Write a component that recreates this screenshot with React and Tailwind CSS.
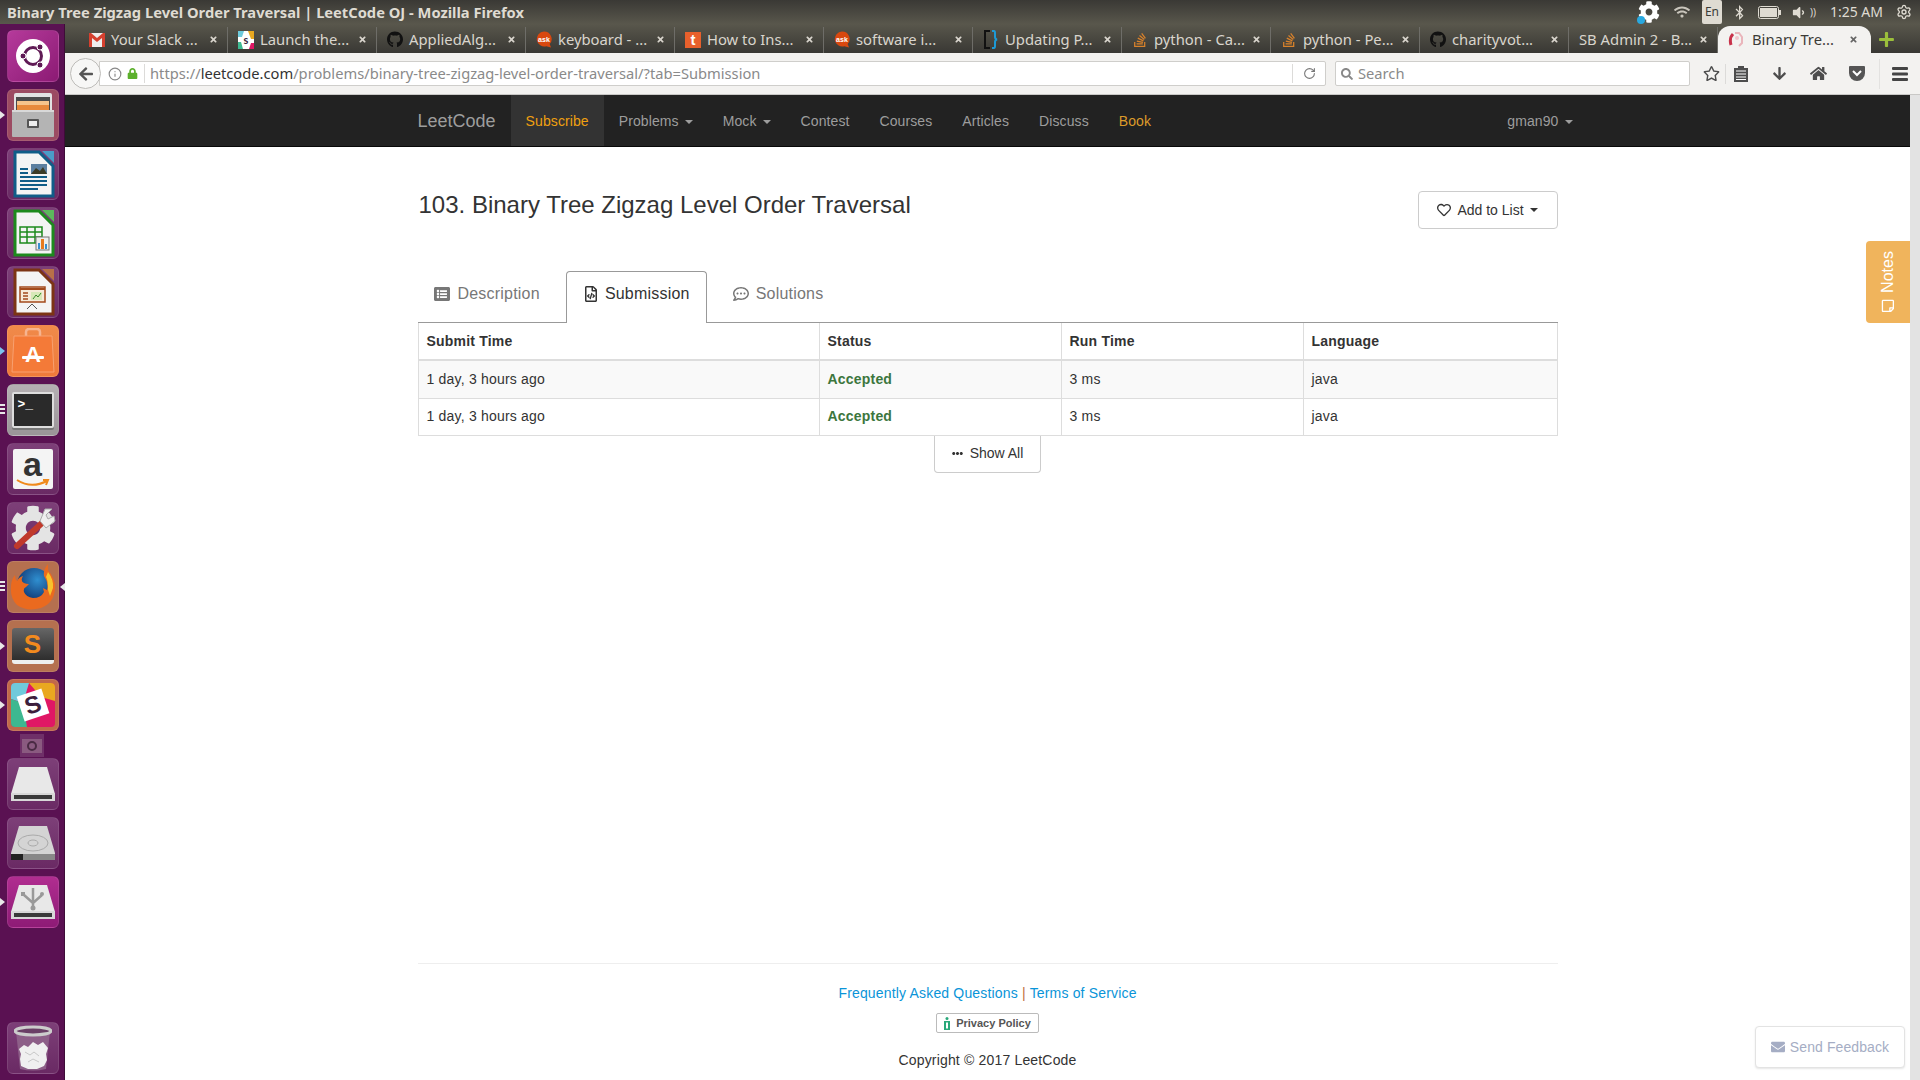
import { FaArrowLeft, FaArrowDown, FaBluetoothB, FaCog, FaEllipsisH, FaEnvelope, FaGithub, FaHome, FaLock, FaPlus, FaRegCommentDots, FaRegFileCode, FaRegHeart, FaRegStar, FaRegStickyNote, FaSearch, FaStackOverflow, FaTimes, FaVolumeDown, FaWifi, FaListAlt } from 'react-icons/fa';
import { Info, RotateCw, Settings } from 'lucide-react';

const sans = "font-['Liberation_Sans',Arial,sans-serif]";
const ui = "font-['Noto_Sans','Lato',sans-serif]";

function Caret({ className = 'border-t-[#9d9d9d]' }) {
  return <span className={`ml-[6px] inline-block h-0 w-0 border-x-4 border-t-4 border-x-transparent align-middle ${className}`} />;
}

function Gmail() {
  return (
    <svg width="16" height="14" viewBox="0 0 16 14">
      <rect width="16" height="14" fill="#eee" />
      <path d="M0 0v14h3V5l5 4 5-4v9h3V0h-2L8 5 2 0z" fill="#d5402f" />
    </svg>
  );
}

function SlackFav() {
  return (
    <svg width="16" height="18" viewBox="0 0 16 18">
      <rect width="16" height="18" rx="1" fill="#fff" />
      <path d="M0 0h6L4 6H0z" fill="#6ecadc" />
      <path d="M10 0h6v8h-3z" fill="#e9a820" />
      <path d="M0 11h3l2 7H0z" fill="#3eb991" />
      <path d="M11 18h5v-6h-3z" fill="#e01765" />
      <text x="8" y="13" textAnchor="middle" fontSize="11" fontWeight="700" fill="#3d1f3d" fontFamily="Lato">s</text>
    </svg>
  );
}

function AskFav() {
  return (
    <svg width="17" height="17" viewBox="0 0 17 17">
      <path d="M8.5 0a8 8 0 0 1 6 13.4L16 17l-5-1.3A8 8 0 1 1 8.5 0z" fill="#d9480f" />
      <text x="8.5" y="11" textAnchor="middle" fontSize="7.5" fontWeight="700" fill="#fff" fontFamily="Liberation Sans">ask</text>
    </svg>
  );
}

function TumblrFav() {
  return <span className={`flex h-[16px] w-[16px] items-center justify-center bg-[#e8602c] text-[15px] font-bold leading-none text-white ${sans}`}>t</span>;
}

function BracketFav() {
  return (
    <svg width="14" height="19" viewBox="0 0 14 19" fill="none" strokeWidth="2">
      <path d="M6 1H1v17h5" stroke="#111" />
      <path d="M8 1h2q1 0 1 2v4q0 2 2 2.500q-2 .5-2 2.500v4q0 2-1 2H8" stroke="#1d9ad6" />
    </svg>
  );
}

function LeetFav() {
  return (
    <svg width="16" height="16" viewBox="0 0 16 16" fill="none">
      <path d="M5 2Q1 6 3 13" stroke="#c8324a" strokeWidth="3" />
      <path d="M7 1h4l3 4v6l-3 3" stroke="#eab5bb" strokeWidth="2" />
      <circle cx="9" cy="6" r="2" fill="#f0c6cb" />
    </svg>
  );
}

const tabs = [
  { title: 'Your Slack ...', icon: <Gmail /> },
  { title: 'Launch the...', icon: <SlackFav /> },
  { title: 'AppliedAlg...', icon: <FaGithub className="text-[17px] text-[#111]" /> },
  { title: 'keyboard - ...', icon: <AskFav /> },
  { title: 'How to Ins...', icon: <TumblrFav /> },
  { title: 'software i...', icon: <AskFav /> },
  { title: 'Updating P...', icon: <BracketFav /> },
  { title: 'python - Ca...', icon: <FaStackOverflow className="text-[16px] text-[#d9822b]" /> },
  { title: 'python - Pe...', icon: <FaStackOverflow className="text-[16px] text-[#d9822b]" /> },
  { title: 'charityvot...', icon: <FaGithub className="text-[17px] text-[#111]" /> },
  { title: 'SB Admin 2 - B...', icon: null },
];

function Tab({ title, icon }) {
  return (
    <div className="flex h-[29px] w-[149px] shrink-0 items-center pl-[10px] pt-[2px]">
      {icon && <span className="mr-[6px] flex w-[16px] shrink-0 items-center justify-center">{icon}</span>}
      <span className="flex-1 whitespace-nowrap text-[14.8px] leading-none text-[#d9d5cd]">{title}</span>
      <FaTimes className="shrink-0 text-[9px] text-[#d9d5cd]" />
      <span className="ml-[9px] h-[26px] w-px shrink-0 bg-[#6e6d68]" />
    </div>
  );
}

function TopBar() {
  return (
    <div className={`flex h-[24px] shrink-0 items-center justify-between bg-gradient-to-b from-[#3a3935] to-[#59574c] pl-[7px] pr-[8px] ${ui}`}>
      <span className="text-[14.7px] font-bold leading-none text-[#dfdbd2]">Binary Tree Zigzag Level Order Traversal | LeetCode OJ - Mozilla Firefox</span>
      <div className="flex items-center text-[#dfdbd2]">
        <span className="relative mr-[14px]">
          <FaCog className="text-[22px] text-white" />
          <span className="absolute bottom-[-1px] left-[-1px] h-[8px] w-[8px] rounded-full bg-[#29a9e0]" />
        </span>
        <FaWifi className="mr-[12px] text-[16px] text-[#c9c5bc]" />
        <span className="mr-[10px] flex h-[24px] w-[20px] items-center justify-center rounded-[2px] bg-[#dfdbd2] text-[12px] text-[#3c3b37]">En</span>
        <FaBluetoothB className="mr-[11px] text-[15px]" />
        <svg className="mr-[9px]" width="24" height="13" viewBox="0 0 24 13" fill="none">
          <rect x="0.500" y="0.500" width="20" height="12" rx="2" stroke="#dfdbd2" />
          <rect x="2" y="2" width="17" height="9" fill="#dfdbd2" />
          <rect x="21" y="4" width="2" height="5" fill="#dfdbd2" />
        </svg>
        <FaVolumeDown className="mr-[4px] text-[15px]" />
        <span className="mr-[14px] text-[10px] leading-none">))</span>
        <span className="mr-[13px] text-[14px] leading-none">1:25 AM</span>
        <Settings className="h-[16px] w-[16px]" strokeWidth={2} />
      </div>
    </div>
  );
}

function TabStrip() {
  return (
    <div className={`flex h-[29px] shrink-0 items-end bg-gradient-to-b from-[#59574c] to-[#393834] pl-[14px] ${ui}`}>
      {tabs.map((t) => <Tab key={t.title} title={t.title} icon={t.icon} />)}
      <div className="flex h-[27px] w-[153px] shrink-0 items-center rounded-t-[12px] bg-[#f3f2f0] pl-[10px] pr-[13px]">
        <span className="mr-[8px] flex w-[16px] shrink-0 justify-center"><LeetFav /></span>
        <span className="flex-1 whitespace-nowrap text-[14.8px] leading-none text-[#3c3b37]">Binary Tre...</span>
        <FaTimes className="text-[9px] text-[#666]" />
      </div>
      <div className="flex h-[29px] items-center pl-[7px] pt-[2px]">
        <FaPlus className="text-[17px] text-[#9bbf3b]" />
      </div>
    </div>
  );
}

function Toolbar() {
  return (
    <div className={`flex h-[42px] shrink-0 items-center border-b border-[#c9c8c6] bg-[#f3f2f0] pl-[5px] ${ui}`}>
      <div className="z-10 flex h-[31px] w-[31px] shrink-0 items-center justify-center rounded-full border border-[#bdbcb9] bg-[#f7f7f6]">
        <FaArrowLeft className="text-[16px] text-[#555]" />
      </div>
      <div className="-ml-[2px] flex h-[25px] w-[1227px] shrink-0 items-center rounded-r-[2px] border border-[#cfcecb] bg-white pl-[8px]">
        <Info className="h-[14px] w-[14px] text-[#888]" />
        <FaLock className="ml-[5px] text-[11px] text-[#5cb02c]" />
        <span className="ml-[6px] mr-[5px] h-[19px] w-px bg-[#dcdbd9]" />
        <span className="flex-1 whitespace-nowrap text-[14.7px] leading-none text-[#8a8a8a]">https://<span className="text-[#333]">leetcode.com</span>/problems/binary-tree-zigzag-level-order-traversal/?tab=Submission</span>
        <span className="h-[19px] w-px bg-[#dcdbd9]" />
        <span className="flex w-[32px] justify-center"><RotateCw className="h-[13px] w-[13px] text-[#777]" /></span>
      </div>
      <div className="ml-[9px] flex h-[25px] w-[355px] shrink-0 items-center rounded-[2px] border border-[#cfcecb] bg-white pl-[5px]">
        <FaSearch className="text-[12px] text-[#888]" />
        <span className="ml-[5px] text-[14.7px] leading-none text-[#8a8a8a]">Search</span>
      </div>
      <div className="ml-[13px] flex items-center text-[#4d4d4d]">
        <FaRegStar className="text-[17px]" />
        <span className="ml-[5px] h-[20px] w-px bg-[#dcdbd9]" />
        <svg className="ml-[8px]" width="14" height="17" viewBox="0 0 14 17">
          <path d="M0 3h4V1h6v2h4v14H0z" fill="#4d4d4d" />
          <path d="M2 6h10M2 9h10M2 12h10M2 14.500h10" stroke="#fff" />
        </svg>
        <FaArrowDown className="ml-[24px] text-[15px]" />
        <FaHome className="ml-[23px] text-[17px]" />
        <svg className="ml-[22px]" width="16" height="15" viewBox="0 0 16 15">
          <path d="M1 0h14a1 1 0 0 1 1 1v6a8 8 0 0 1-16 0V1a1 1 0 0 1 1-1z" fill="#555" />
          <path d="M4 5l4 4 4-4" stroke="#fff" strokeWidth="2" fill="none" />
        </svg>
        <span className="ml-[14px] h-[30px] w-px bg-[#e3e2e0]" />
        <svg className="ml-[12px]" width="16" height="14" viewBox="0 0 16 14" fill="#444">
          <rect width="16" height="3" rx="1" />
          <rect y="5.500" width="16" height="3" rx="1" />
          <rect y="11" width="16" height="3" rx="1" />
        </svg>
      </div>
    </div>
  );
}

function NavItem({ children, dark, active, caret }) {
  return (
    <a className={`flex h-full items-center px-[15px] pt-[2px] text-[14px] tracking-[0.1px] ${active ? 'bg-[#333] text-[#f0a010]' : dark ? 'text-[#dd9a2a]' : 'text-[#9d9d9d]'}`}>
      {children}
      {caret && <Caret />}
    </a>
  );
}

function SiteNav() {
  return (
    <div className={`h-[52px] shrink-0 border-b border-[#080808] bg-[#222] ${sans}`}>
      <div className="mx-auto flex h-full w-[1170px] items-center justify-between px-[15px]">
        <div className="flex h-full items-center">
          <span className="mr-[15px] pt-[2px] text-[18px] text-[#9d9d9d]">LeetCode</span>
          <NavItem active>Subscribe</NavItem>
          <NavItem caret>Problems</NavItem>
          <NavItem caret>Mock</NavItem>
          <NavItem>Contest</NavItem>
          <NavItem>Courses</NavItem>
          <NavItem>Articles</NavItem>
          <NavItem>Discuss</NavItem>
          <NavItem dark>Book</NavItem>
        </div>
        <a className="-mr-[15px] flex items-center pt-[2px] text-[14px] tracking-[0.1px] text-[#9d9d9d]">gman90<Caret /></a>
      </div>
    </div>
  );
}

function SubmissionTable() {
  const rows = [
    { time: '1 day, 3 hours ago', status: 'Accepted', run: '3 ms', lang: 'java', striped: true, height: 'h-[38px]' },
    { time: '1 day, 3 hours ago', status: 'Accepted', run: '3 ms', lang: 'java', height: 'h-[37px]' },
  ];
  const cell = 'border border-[#ddd] pl-[8px] pr-[8px] text-left';
  return (
    <table className="w-[1139px] table-fixed border-collapse text-[14px] tracking-[0.2px] text-[#333]">
      <colgroup>
        <col className="w-[401px]" />
        <col className="w-[242px]" />
        <col className="w-[242px]" />
        <col className="w-[254px]" />
      </colgroup>
      <thead>
        <tr className="h-[37px]">
          <th className={`${cell} border-t-0 border-b-2 font-bold`}>Submit Time</th>
          <th className={`${cell} border-t-0 border-b-2 font-bold`}>Status</th>
          <th className={`${cell} border-t-0 border-b-2 font-bold`}>Run Time</th>
          <th className={`${cell} border-t-0 border-b-2 font-bold`}>Language</th>
        </tr>
      </thead>
      <tbody>
        {rows.map((r, i) => (
          <tr key={i} className={`${r.height} ${r.striped ? 'bg-[#f9f9f9]' : 'bg-white'}`}>
            <td className={cell}>{r.time}</td>
            <td className={`${cell} font-bold text-[#3c763d]`}>{r.status}</td>
            <td className={cell}>{r.run}</td>
            <td className={cell}>{r.lang}</td>
          </tr>
        ))}
      </tbody>
    </table>
  );
}

function Page() {
  return (
    <div className={`relative flex min-h-0 flex-1 bg-white ${sans}`}>
      <div className="mx-auto flex w-[1170px] flex-col px-[15px]">
        <div className="mt-[44px] flex items-start justify-between">
          <h1 className="pl-px text-[24px] leading-[28px] text-[#333]">103. Binary Tree Zigzag Level Order Traversal</h1>
          <button className="flex h-[38px] w-[140px] items-center justify-center rounded-[4px] border border-[#ccc] bg-white text-[14px] text-[#333]">
            <FaRegHeart className="mr-[6px] text-[14px]" />
            Add to List
            <Caret className="border-t-[#333]" />
          </button>
        </div>

        <div className="mt-[42px] flex h-[52px] shrink-0 items-stretch border-b border-[#999] text-[16px] tracking-[0.2px]">
          <div className="mr-[10px] flex items-center px-[16px] pb-[6px] text-[#777]">
            <FaListAlt className="mr-[8px] text-[16px]" />Description
          </div>
          <div className="-mb-px flex w-[141px] items-center justify-center rounded-t-[4px] border border-b-0 border-[#999] bg-white pb-[7px] text-[#333]">
            <FaRegFileCode className="mr-[6px] text-[16px]" />Submission
          </div>
          <div className="ml-[10px] flex items-center px-[16px] pb-[6px] text-[#777]">
            <FaRegCommentDots className="mr-[7px] text-[16px]" />Solutions
          </div>
        </div>

        <SubmissionTable />

        <div className="flex justify-center">
          <button className="flex h-[37px] w-[107px] items-center justify-center rounded-b-[4px] border border-t-0 border-[#ccc] bg-white text-[14px] text-[#333]">
            <FaEllipsisH className="mr-[7px] text-[11px]" />Show All
          </button>
        </div>

        <div className="mt-auto flex flex-col items-center border-t border-[#eee] pb-[10px] pt-[19px] text-[14px] tracking-[0.17px] text-[#333]">
          <p className="leading-[20px]"><a className="text-[#0a94d8]">Frequently Asked Questions</a> <span className="text-[#c0703c]">|</span> <a className="text-[#0a94d8]">Terms of Service</a></p>
          <span className="mt-[10px] flex h-[20px] w-[103px] items-center justify-center rounded-[2px] border border-[#bbb] text-[11px] font-bold tracking-normal text-[#555]">
            <svg className="mr-[6px]" width="6" height="13" viewBox="0 0 6 13" fill="#2aa87a">
              <circle cx="3" cy="1.500" r="1.500" />
              <path d="M0 4h6v9H0zM2 5.500v6h2v-6z" fillRule="evenodd" />
            </svg>
            Privacy Policy
          </span>
          <p className="mt-[17px] leading-[20px]">Copyright © 2017 LeetCode</p>
        </div>
      </div>

      <div className="absolute right-0 top-[94px] flex h-[82px] w-[44px] flex-col items-center justify-center rounded-l-[4px] bg-[#f0b45c] text-white">
        <span className="flex rotate-[-90deg] items-center whitespace-nowrap text-[16px]">
          <FaRegStickyNote className="mr-[6px] rotate-90 text-[14px]" />Notes
        </span>
      </div>

      <div className="absolute bottom-[12px] right-[5px] flex h-[42px] w-[150px] items-center justify-center rounded-[4px] border border-[#e3e3e3] bg-white text-[14px] tracking-[0.1px] text-[#a5adc4] shadow-[0_1px_2px_rgba(0,0,0,0.1)]">
        <FaEnvelope className="mr-[5px] text-[14px]" />Send Feedback
      </div>
    </div>
  );
}

function Tile({ bg, pip, children }) {
  return (
    <div className="relative flex h-[52px] w-[65px] shrink-0 justify-center">
      <div className={`relative flex h-[52px] w-[52px] items-center justify-center overflow-hidden rounded-[6px] border border-white/10 ${bg}`}>{children}</div>
      {pip === 'arrow' && <span className="absolute left-0 top-[22px] h-0 w-0 border-y-4 border-l-[5px] border-y-transparent border-l-[#e8e8e8]" />}
      {pip === 'blue' && <span className="absolute left-0 top-[22px] h-0 w-0 border-y-4 border-l-[5px] border-y-transparent border-l-[#7cc4ee]" />}
      {(pip === 'lines' || pip === 'lines2') && (
        <span className="absolute left-0 top-[20px] flex flex-col gap-[2px]">
          <span className="h-[2px] w-[5px] bg-[#e8e8e8]" />
          <span className="h-[2px] w-[5px] bg-[#e8e8e8]" />
          <span className="h-[2px] w-[5px] bg-[#e8e8e8]" />
        </span>
      )}
      {pip === 'lines2' && <span className="absolute right-0 top-[22px] h-0 w-0 border-y-4 border-r-[5px] border-y-transparent border-r-[#e8e8e8]" />}
    </div>
  );
}

function OfficeDoc({ color, corner, children }) {
  return (
    <svg width="44" height="48" viewBox="0 0 44 48">
      <path d="M4 2h24l14 14v30H4z" fill="#f4f4f4" stroke={color} strokeWidth="3" />
      <path d="M31 1l12 12V1z" fill={corner} />
      {children}
    </svg>
  );
}

function Drive({ children }) {
  return (
    <svg width="46" height="36" viewBox="0 0 46 36">
      <path d="M9 1h28l8 27H1z" fill="#e8e8e8" />
      <rect x="1" y="27" width="44" height="8" fill="#d8d8d8" />
      <rect x="4" y="29" width="38" height="4" fill="#3a3a3a" />
      {children}
    </svg>
  );
}

function Dock() {
  const plain = 'bg-gradient-to-b from-[#7d3f78] to-[#6a2a64]';
  const warm = 'bg-[#b5704f]';
  return (
    <div className="flex w-[65px] shrink-0 flex-col border-r border-[#3e0c38] bg-[#5a1152] pt-[6px]">
      <div className="flex flex-col gap-[7px]">
        <Tile bg="bg-gradient-to-br from-[#b53a9b] to-[#8c1a74]">
          <svg width="34" height="34" viewBox="0 0 34 34">
            <circle cx="17" cy="17" r="17" fill="#fff" />
            <circle cx="17" cy="17" r="8.500" fill="none" stroke="#5f1a55" strokeWidth="3" />
            <circle cx="24" cy="8" r="3" fill="#5f1a55" stroke="#fff" />
            <circle cx="7" cy="17" r="3" fill="#5f1a55" stroke="#fff" />
            <circle cx="24" cy="26" r="3" fill="#5f1a55" stroke="#fff" />
          </svg>
        </Tile>
        <Tile bg="bg-[#9c4b62]" pip="arrow">
          <svg width="42" height="44" viewBox="0 0 42 44">
            <path d="M2 2q0-2 2-2h34q2 0 2 2v16H2z" fill="#e2e2e2" />
            <rect x="4" y="4" width="34" height="15" fill="#4a4a4a" />
            <rect x="5" y="8" width="32" height="4" fill="#f6c48c" />
            <rect x="5" y="12" width="32" height="7" fill="#e88a3c" />
            <rect y="17" width="42" height="27" rx="1" fill="#b4b4b4" />
            <rect y="17" width="42" height="2" fill="#d8d8d8" />
            <rect x="15" y="26" width="12" height="9" rx="1" fill="#555" />
            <rect x="17" y="28" width="8" height="5" fill="#eee" />
          </svg>
        </Tile>
        <Tile bg={plain}>
          <OfficeDoc color="#105d88" corner="#4a9cc8">
            <path d="M9 19h8M9 23h8M9 27h27M9 31h27M9 35h27M9 39h18" stroke="#105d88" strokeWidth="2" />
            <rect x="20" y="14" width="16" height="10" fill="#5c7fa0" />
            <path d="M20 24l5-6 4 3 3-4 4 7z" fill="#3c3c28" />
          </OfficeDoc>
        </Tile>
        <Tile bg={plain}>
          <OfficeDoc color="#1d8a1d" corner="#5cb85c">
            <path d="M9 18h22v16H9zM9 23h22M9 28h22M16 18v16M24 18v16" fill="none" stroke="#1d8a1d" strokeWidth="1.500" />
            <rect x="25" y="28" width="13" height="13" fill="#eee" stroke="#777" />
            <rect x="27" y="34" width="2" height="6" fill="#3a8fd0" />
            <rect x="30" y="30" width="3" height="10" fill="#e87a20" />
            <rect x="34" y="35" width="2" height="5" fill="#3a8fd0" />
          </OfficeDoc>
        </Tile>
        <Tile bg={plain}>
          <OfficeDoc color="#7c3414" corner="#b87048">
            <rect x="9" y="19" width="25" height="15" fill="#f6ead8" stroke="#a34a1c" strokeWidth="1.500" />
            <path d="M9 21h25" stroke="#a34a1c" strokeWidth="2" />
            <path d="M12 25h5M12 28h5M12 31h5" stroke="#a34a1c" strokeWidth="1.500" />
            <rect x="20" y="24" width="11" height="8" fill="#d8e8b8" />
            <path d="M22 31l3-4 2 2 3-4" stroke="#3a8a2a" fill="none" />
            <path d="M16 41l5-5 5 5" stroke="#555" fill="none" />
          </OfficeDoc>
        </Tile>
        <Tile bg="bg-gradient-to-b from-[#f08a4a] to-[#ee7a3a]" pip="blue">
          <svg width="44" height="46" viewBox="0 0 44 46">
            <path d="M15 8V4q0-3 3-3h8q3 0 3 3v4" fill="none" stroke="#f6b490" strokeWidth="2.500" />
            <path d="M3 8h38l2 36H1z" fill="#f47a38" stroke="#f8a070" />
            <text x="22" y="34" textAnchor="middle" fontSize="22" fontWeight="700" fill="#fff" fontFamily="Liberation Sans">A</text>
            <rect x="11" y="28" width="22" height="3" rx="1" fill="#fff" />
          </svg>
        </Tile>
        <Tile bg="bg-gradient-to-b from-[#b5b0b3] to-[#9a9498]" pip="lines">
          <div className="flex h-[36px] w-[42px] items-start rounded-[2px] border-2 border-[#ddd] bg-[#2a2a2a] p-[4px] shadow-[0_2px_0_#777]">
            <span className="font-['Liberation_Mono',monospace] text-[13px] font-bold leading-none text-white">&gt;_</span>
          </div>
        </Tile>
        <Tile bg={plain}>
          <div className={`flex h-[40px] w-[40px] flex-col items-center justify-start rounded-[2px] bg-[#f4f4f4] ${sans}`}>
            <span className="text-[34px] font-bold leading-[30px] text-[#333]">a</span>
            <svg width="36" height="9" viewBox="0 0 36 9" fill="none">
              <path d="M2 1q14 9 30 1M28 1l5 0-2 5" stroke="#f08a1c" strokeWidth="2" />
            </svg>
          </div>
        </Tile>
        <Tile bg={plain}>
          <FaCog className="text-[46px] text-[#e4e4e4]" />
          <svg className="absolute inset-0" width="50" height="50" viewBox="0 0 50 50">
            <path d="M9 43L34 20" stroke="#c0392b" strokeWidth="6" strokeLinecap="round" />
            <path d="M32 18l5-12 7 0-6 6 2 4 6-3 1 5-9 7z" fill="#eee" stroke="#aaa" />
          </svg>
        </Tile>
        <Tile bg={warm} pip="lines2">
          <svg width="46" height="46" viewBox="0 0 46 46">
            <defs>
              <radialGradient id="globe" cx="0.6" cy="0.35" r="0.6">
                <stop offset="0" stopColor="#2f8fd0" />
                <stop offset="1" stopColor="#123c78" />
              </radialGradient>
            </defs>
            <circle cx="24" cy="21" r="17" fill="url(#globe)" />
            <path d="M38 6q8 10 7 19-1 14-14 19-14 4-24-3Q0 34 1 23q0-7 4-12 0 4 2 6 2-4 6-5-3 5 1 7 2 1 5 1l-3 3q-3 1-2 5 2 5 9 6 8 0 11-6l-1-4 4 2q2-7-3-14-1-6 4-12z" fill="#ea6a1f" />
            <path d="M38 8q6 8 5 16l-3 8-2-6q0-10-2-13z" fill="#f8c22c" />
          </svg>
        </Tile>
        <Tile bg={warm} pip="arrow">
          <div className="flex h-[36px] w-[42px] items-center justify-center rounded-[3px] border-b-4 border-[#eee] bg-gradient-to-b from-[#666] to-[#2e2e2e]">
            <span className={`text-[26px] font-bold leading-none text-[#f28a1e] ${sans}`}>S</span>
          </div>
        </Tile>
        <Tile bg="bg-[#c0694a]" pip="arrow">
          <div className="relative flex h-[44px] w-[44px] items-center justify-center overflow-hidden rounded-[4px] bg-[#e01765]">
            <svg className="absolute inset-0" width="44" height="44" viewBox="0 0 44 44">
              <path d="M0 0h18L12 20 0 16z" fill="#70cadb" />
              <path d="M18 0h26v18L30 14z" fill="#e9a820" />
              <path d="M0 16l12 4 4 24H0z" fill="#3eb890" />
            </svg>
            <span className={`z-10 flex h-[26px] w-[26px] rotate-[-18deg] items-center justify-center bg-white text-[24px] font-bold leading-none text-[#3d1f3d] ${sans}`}>S</span>
          </div>
        </Tile>
      </div>

      <div className="mx-auto mt-[3px] flex h-[23px] w-[24px] items-center justify-center bg-[#6f3068]">
        <svg width="20" height="14" viewBox="0 0 20 14">
          <rect width="20" height="14" fill="#8a5a80" />
          <circle cx="10" cy="7" r="4" fill="none" stroke="#4a2a44" strokeWidth="2" />
        </svg>
      </div>

      <div className="mt-px flex flex-col gap-[7px]">
        <Tile bg={plain}><Drive /></Tile>
        <Tile bg={plain}>
          <svg width="46" height="36" viewBox="0 0 46 36">
            <path d="M9 1h28l8 27v7H1v-7z" fill="#d4d4d4" />
            <ellipse cx="23" cy="18" rx="15" ry="8" fill="none" stroke="#aaa" />
            <ellipse cx="23" cy="18" rx="5" ry="3" fill="none" stroke="#aaa" />
            <rect x="1" y="29" width="44" height="6" fill="#888" />
            <rect x="1" y="29" width="12" height="6" fill="#222" />
          </svg>
        </Tile>
        <Tile bg="bg-gradient-to-b from-[#b02d90] to-[#8e1b76]" pip="arrow">
          <Drive>
            <path d="M23 4v20M14 11l9 8 9-8" fill="none" stroke="#999" strokeWidth="2.500" />
            <rect x="11" y="8" width="4" height="4" fill="#999" />
            <circle cx="32" cy="10" r="2" fill="#999" />
            <circle cx="23" cy="24" r="2.500" fill="#999" />
          </Drive>
        </Tile>
      </div>

      <div className="mt-auto pb-[6px]">
        <Tile bg={plain}>
          <svg width="38" height="46" viewBox="0 0 38 46">
            <path d="M2 6l4 38q13 3 26 0l4-38z" fill="#8d5f88" />
            <ellipse cx="19" cy="6" rx="18" ry="4" fill="#6a3f66" stroke="#ccc" strokeWidth="3" />
            <path d="M5 24l5-4 4 2 5-5 5 3 5-3 5 6-2 6 1 6-3 6-7 3-9 0-7-3-1-7 1-5z" fill="#f0f0f0" />
            <path d="M11 27l5 3 4-3 5 4M14 37l5-3 6 3" fill="none" stroke="#c8c8c8" />
          </svg>
        </Tile>
      </div>
    </div>
  );
}

export default function App() {
  return (
    <div className="flex h-[1080px] w-[1920px] flex-col overflow-hidden bg-white">
      <TopBar />
      <div className="flex min-h-0 flex-1">
        <Dock />
        <div className="flex min-w-0 flex-1 flex-col">
          <TabStrip />
          <Toolbar />
          <div className="flex min-h-0 flex-1">
            <div className="flex min-w-0 flex-1 flex-col">
              <SiteNav />
              <Page />
            </div>
            <div className="w-[10px] shrink-0 bg-[#e3e3e3]" />
          </div>
        </div>
      </div>
    </div>
  );
}
